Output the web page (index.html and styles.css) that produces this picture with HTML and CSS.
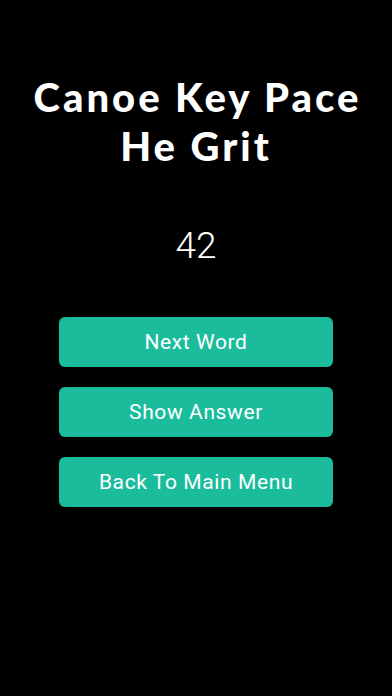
FILE: index.html
```html
<!DOCTYPE html>
<html lang="en">
<head>
<meta charset="utf-8">
<title>Canoe Key Pace He Grit</title>
<link rel="stylesheet" href="styles.css">
</head>
<body>
<main class="screen">
  <h1 class="title">Canoe Key Pace<br>He Grit</h1>
  <div class="score">42</div>
  <div class="actions">
    <button class="btn" type="button">Next Word</button>
    <button class="btn" type="button">Show Answer</button>
    <button class="btn" type="button">Back To Main Menu</button>
  </div>
</main>
</body>
</html>
```

FILE: styles.css
```css
html, body {
  margin: 0;
  padding: 0;
  background: #000;
}
body {
  width: 392px;
  height: 696px;
  overflow: hidden;
  color: #fff;
  font-family: Roboto, "Liberation Sans", sans-serif;
}
.screen {
  display: flex;
  flex-direction: column;
  align-items: center;
  padding-top: 73px;
}
.title {
  margin: 0;
  font-family: Lato, "DejaVu Sans", sans-serif;
  font-weight: 900;
  font-size: 40px;
  line-height: 49px;
  text-align: center;
  letter-spacing: 3px;
  text-indent: 3px;
}
.score {
  margin-top: 54px;
  font-size: 37px;
  line-height: 41px;
  font-weight: 300;
}
.actions {
  margin-top: 51px;
  display: flex;
  flex-direction: column;
  gap: 20px;
}
.btn {
  width: 274px;
  height: 50px;
  border: 0;
  border-radius: 6px;
  background: #1abc9c;
  color: #fff;
  font-family: Roboto, "Liberation Sans", sans-serif;
  font-size: 21px;
  font-weight: 400;
  letter-spacing: 0.6px;
  padding: 0;
}
```
